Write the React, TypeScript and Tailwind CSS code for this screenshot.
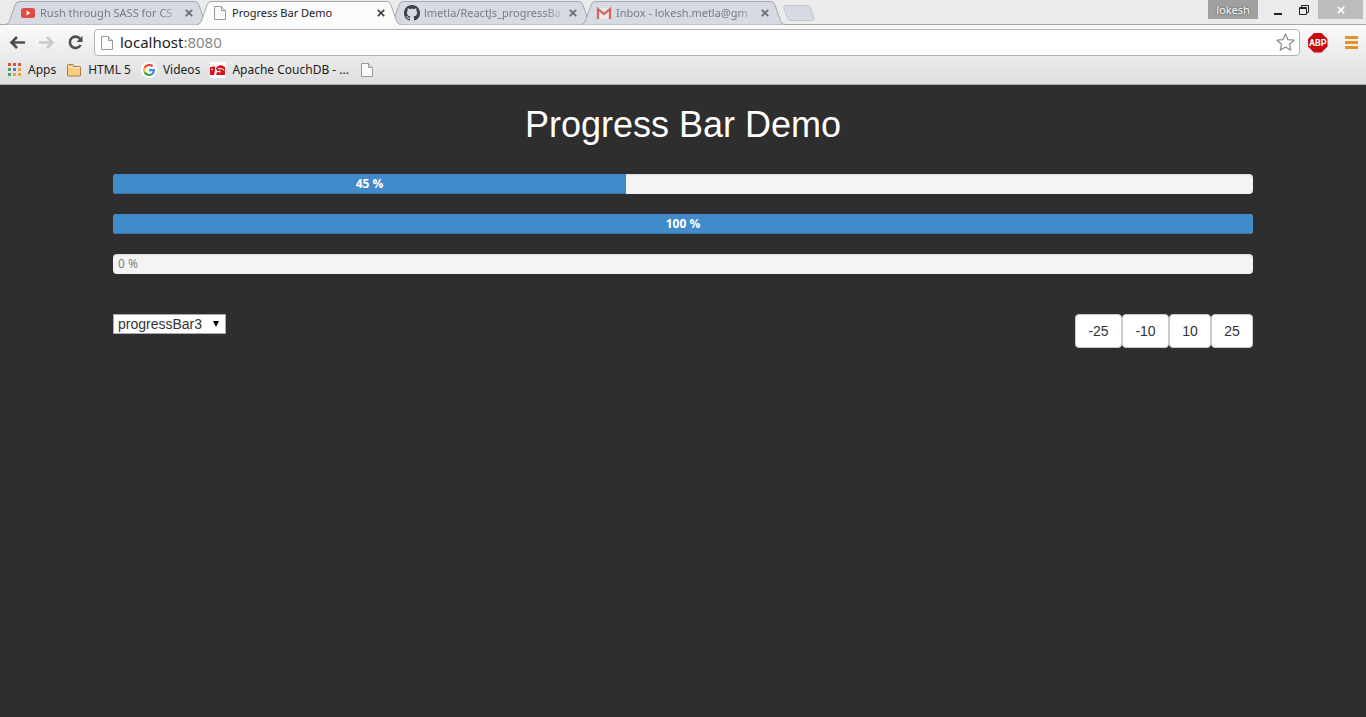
import { useState } from "react";
import type { ReactNode } from "react";

function PageIcon() {
  return (
    <svg width="16" height="16" viewBox="0 0 16 16" className="shrink-0" aria-hidden="true">
      <path d="M2.5 1.5h7l4 4v9h-11z" fill="#fafafa" stroke="#999" />
      <path d="M9.5 1.5v4h4" fill="#e4e4e4" stroke="#999" />
    </svg>
  );
}

function VideoIcon() {
  return (
    <svg width="16" height="16" viewBox="0 0 16 16" className="shrink-0" aria-hidden="true">
      <rect x="1" y="3" width="14" height="10" rx="2.5" fill="#e04b44" />
      <path d="M6.5 5.4v5l4-2.5z" fill="#fff" />
    </svg>
  );
}

function GitHubIcon() {
  return (
    <svg width="16" height="16" viewBox="0 0 16 16" className="shrink-0" aria-hidden="true">
      <path
        fill="#3c4046"
        d="M8 0C3.58 0 0 3.58 0 8c0 3.54 2.29 6.53 5.47 7.59.4.07.55-.17.55-.38 0-.19-.01-.82-.01-1.49-2.01.37-2.53-.49-2.69-.94-.09-.23-.48-.94-.82-1.13-.28-.15-.68-.52-.01-.53.63-.01 1.08.58 1.23.82.72 1.21 1.87.87 2.33.66.07-.52.28-.87.51-1.07-1.78-.2-3.64-.89-3.64-3.95 0-.87.31-1.59.82-2.15-.08-.2-.36-1.02.08-2.12 0 0 .67-.21 2.2.82.64-.18 1.32-.27 2-.27s1.36.09 2 .27c1.53-1.04 2.2-.82 2.2-.82.44 1.1.16 1.92.08 2.12.51.56.82 1.27.82 2.15 0 3.07-1.87 3.75-3.65 3.95.29.25.54.73.54 1.48 0 1.07-.01 1.93-.01 2.2 0 .21.15.46.55.38A8.01 8.01 0 0 0 16 8c0-4.42-3.58-8-8-8z"
      />
    </svg>
  );
}

function MailIcon() {
  return (
    <svg width="16" height="16" viewBox="0 0 16 16" className="shrink-0" aria-hidden="true">
      <rect x="1" y="3" width="14" height="11" fill="#e9e9ec" />
      <path d="M2 14V4l6 5 6-5v10" fill="none" stroke="#d8625b" strokeWidth="2.2" />
    </svg>
  );
}

function GoogleIcon() {
  return (
    <svg width="16" height="16" viewBox="0 0 16 16" className="shrink-0" aria-hidden="true">
      <circle cx="8" cy="8" r="8" fill="#fff" />
      <g fill="none" strokeWidth="2.2">
        <path d="M11.6 4.4A5 5 0 0 0 3.6 5.7" stroke="#ea4335" />
        <path d="M3.6 5.7a5 5 0 0 0 0 4.6" stroke="#fbbc05" />
        <path d="M3.6 10.3a5 5 0 0 0 7.7 1.5" stroke="#34a853" />
        <path d="M11.3 11.8A5 5 0 0 0 13 8.2H8" stroke="#4285f4" />
      </g>
    </svg>
  );
}

function AppsIcon() {
  const colors = ["#d95040", "#d95040", "#d95040", "#4fa165", "#4a7fe0", "#e8a93a", "#4fa165", "#e8a93a", "#e8a93a"];
  return (
    <svg width="14" height="14" viewBox="0 0 14 14" className="shrink-0" aria-hidden="true">
      {colors.map((color, i) => (
        <rect key={i} x={(i % 3) * 5} y={Math.floor(i / 3) * 5} width="3" height="3" fill={color} />
      ))}
    </svg>
  );
}

function FolderIcon() {
  return (
    <svg width="16" height="16" viewBox="0 0 16 16" className="shrink-0" aria-hidden="true">
      <path d="M1.5 13V3.5q0-1 1-1h4q1 0 1 1v1h6q1 0 1 1V13q0 1-1 1h-11q-1 0-1-1z" fill="#f9cd80" stroke="#a67a3c" />
      <path d="M2 5.500h12" stroke="#fdebc4" />
    </svg>
  );
}

function CouchIcon() {
  return (
    <svg width="16" height="16" viewBox="0 0 16 16" className="shrink-0" aria-hidden="true">
      <rect width="16" height="16" fill="#fff" />
      <path d="M0 5h2l1-1 2 1v3l-1 5H0zM6 6l2-2 3-1 4 2v8H6l1-3 4 .5-1-2-3 .5z" fill="#dc1218" />
      <path d="M1 7l2 1M8 6.500l5 .5 1 1.500" fill="none" stroke="#fff" />
    </svg>
  );
}

function CloseIcon() {
  return (
    <svg width="8" height="8" viewBox="0 0 8 8" aria-hidden="true">
      <path d="M.8.8l6.400 6.400M7.200.8L.8 7.200" stroke="currentColor" strokeWidth="1.700" />
    </svg>
  );
}

interface TabProps {
  title: string;
  icon: ReactNode;
  active?: boolean;
}

function Tab({ title, icon, active = false }: TabProps) {
  return (
    <div className={active ? "relative z-10 -mr-3 h-[25px] w-[204px] shrink-0" : "relative -mr-3 h-[25px] w-[204px] shrink-0"}>
      <svg className="absolute inset-0" width="204" height="25" viewBox="0 0 204 25" aria-hidden="true">
        <path
          d="M0 24.500C3 24.500 4 22 5 19.500L10 5Q11.500 1.500 14 1.500H190Q192.500 1.500 194 5L199 19.500C200 22 201 24.500 204 24.500"
          fill={active ? "#fbfbfb" : "#d6dbe3"}
          stroke="#a5a8ac"
        />
        {active && <path d="M2 24.500H202" stroke="#fbfbfb" />}
      </svg>
      <div className="relative flex h-[25px] items-center px-[15px] pr-3.5">
        {icon}
        <a
          href="#"
          className={
            active
              ? "ml-1 min-w-0 flex-1 whitespace-nowrap text-[#222]"
              : "ml-1 min-w-0 flex-1 mask-r-from-85% whitespace-nowrap text-[#777b82]"
          }
        >
          {title}
        </a>
        <button
          type="button"
          aria-label={`Close ${title}`}
          className={active ? "p-0.5 text-[#444]" : "p-0.5 text-[#666a70]"}
        >
          <CloseIcon />
        </button>
      </div>
    </div>
  );
}

function Bookmark({ icon, label }: { icon: ReactNode; label: string }) {
  return (
    <a href="#" className="flex items-center gap-1.5 whitespace-nowrap text-[#222]">
      {icon}
      {label}
    </a>
  );
}

function BrowserChrome() {
  return (
    <header className="font-['Noto_Sans','Open_Sans',sans-serif] text-[12px] leading-4">
      <div className="flex h-[25px] items-start bg-[#ebebeb] pl-[5px] text-[11px] shadow-[inset_0_-1px_#a5a8ac]">
        <Tab title="Rush through SASS for CS" icon={<VideoIcon />} />
        <Tab title="Progress Bar Demo" icon={<PageIcon />} active />
        <Tab title="lmetla/ReactJs_progressBa" icon={<GitHubIcon />} />
        <Tab title="Inbox - lokesh.metla@gm" icon={<MailIcon />} />
        <button type="button" aria-label="New tab" className="mt-[5px] ml-2.5">
          <svg width="32" height="16" viewBox="0 0 32 16" aria-hidden="true">
            <path d="M3 .5H24Q26.500.5 27.500 3L31 13Q31.500 15.500 29 15.500H8Q5.500 15.500 4.500 13L.8 3Q.5.5 3 .5z" fill="#d6dbe3" stroke="#c2c5ca" />
          </svg>
        </button>
        <div className="ml-auto flex h-[19px] items-center">
          <button type="button" className="h-[19px] w-[50px] bg-[#a0a0a0] text-white [text-shadow:0_0_2px_#333]">
            lokesh
          </button>
          <button type="button" aria-label="Minimize" className="ml-4">
            <svg width="8" height="10" viewBox="0 0 8 10" aria-hidden="true">
              <path d="M0 8h8v2H0z" fill="#222" />
            </svg>
          </button>
          <button type="button" aria-label="Restore" className="ml-[17px]">
            <svg width="10" height="10" viewBox="0 0 10 10" fill="none" stroke="#222" aria-hidden="true">
              <path d="M2.500 2V.5h7v7H8" />
              <path d="M.5 2.500h7v7h-7zM.5 3.500h7" />
            </svg>
          </button>
          <button type="button" aria-label="Close window" className="mr-[3px] ml-[9px] flex h-[19px] w-[45px] items-center justify-center bg-[#bcbcbc] text-white">
            <CloseIcon />
          </button>
        </div>
      </div>

      <div className="border-b border-[#aaa] bg-linear-to-b from-[#fafafa] to-[#dedede]">
        <div className="flex items-center pt-1 pr-2">
          <button type="button" aria-label="Back" className="ml-[9px]">
            <svg width="17" height="16" viewBox="0 0 17 16" fill="none" stroke="#4d4d4d" strokeWidth="2.6" aria-hidden="true">
              <path d="M16 7.500H3M8 2L2.500 7.500 8 13" />
            </svg>
          </button>
          <button type="button" aria-label="Forward" className="ml-3">
            <svg width="17" height="16" viewBox="0 0 17 16" fill="none" stroke="#c9c9c9" strokeWidth="2.6" aria-hidden="true">
              <path d="M1 7.500h13M9 2L14.500 7.500 9 13" />
            </svg>
          </button>
          <button type="button" aria-label="Reload" className="ml-3">
            <svg width="17" height="16" viewBox="0 0 17 16" aria-hidden="true">
              <path d="M13 3.700A5.700 5.700 0 1 0 13.600 10" fill="none" stroke="#4d4d4d" strokeWidth="2.600" />
              <path d="M15.500 .8v6.200H9.500z" fill="#4d4d4d" />
            </svg>
          </button>
          <div className="ml-2.5 flex h-[27px] min-w-0 flex-1 items-center rounded-sm border border-[#b4b4b4] bg-white pr-1 pl-1">
            <PageIcon />
            <div className="ml-[5px] flex-1 pb-0.5 text-[15px] leading-5 text-[#888]">
              <span className="text-[#222]">localhost</span>:8080
            </div>
            <button type="button" aria-label="Bookmark this page">
              <svg width="19" height="19" viewBox="0 0 19 19" aria-hidden="true">
                <path d="M9.500 1l2.400 5.600 6.100.6-4.600 4 1.400 6-5.300-3.100-5.300 3.100 1.400-6-4.600-4 6.100-.6z" fill="#fff" stroke="#8a8a8a" strokeWidth="1.200" strokeLinejoin="round" />
              </svg>
            </button>
          </div>
          <button type="button" aria-label="Adblock Plus" className="ml-2">
            <svg width="20" height="20" viewBox="0 0 20 20" aria-hidden="true">
              <path d="M6 0h7.500l6 6v7.500l-6 6H6l-6-6V6z" fill="#c70d12" />
              <text x="9.700" y="13" textAnchor="middle" fontSize="9" fontWeight="700" fill="#fff" fontFamily="Roboto">
                ABP
              </text>
            </svg>
          </button>
          <button type="button" aria-label="Menu" className="ml-[17px]">
            <svg width="13" height="13" viewBox="0 0 13 13" fill="#e8912d" aria-hidden="true">
              <path d="M0 0h13v3H0zM0 5h13v3H0zM0 10h13v3H0z" />
            </svg>
          </button>
        </div>
        <nav aria-label="Bookmarks" className="flex h-7 items-center gap-2.5 pl-2">
          <Bookmark icon={<AppsIcon />} label="Apps" />
          <Bookmark icon={<FolderIcon />} label="HTML 5" />
          <Bookmark icon={<GoogleIcon />} label="Videos" />
          <Bookmark icon={<CouchIcon />} label="Apache CouchDB - ..." />
          <a href="#" aria-label="Untitled bookmark">
            <PageIcon />
          </a>
        </nav>
      </div>
    </header>
  );
}

function ProgressBar({ value, label }: { value: number; label: string }) {
  return (
    <div
      role="progressbar"
      aria-label={label}
      aria-valuenow={value}
      aria-valuemin={0}
      aria-valuemax={100}
      className="mb-5 h-5 overflow-hidden rounded-sm bg-[#f4f4f4] font-['Open_Sans','Noto_Sans',sans-serif] text-[12px] leading-5 shadow-[inset_0_1px_2px_rgba(0,0,0,0.1)]"
    >
      {value > 0 ? (
        <div
          className="h-full bg-[#428bca] text-center font-bold text-white shadow-[inset_0_-1px_0_rgba(0,0,0,0.15)]"
          style={{ width: `${Math.min(value, 100)}%` }}
        >
          {value} %
        </div>
      ) : (
        <div className="px-[5px] text-[#777]">{value} %</div>
      )}
    </div>
  );
}

const names = ["progressBar1", "progressBar2", "progressBar3"];
const steps = [-25, -10, 10, 25];

export default function App() {
  const [values, setValues] = useState([45, 100, 0]);
  const [selected, setSelected] = useState(2);

  const change = (step: number) =>
    setValues((current) => current.map((v, i) => (i === selected ? Math.max(0, v + step) : v)));

  return (
    <div className="flex min-h-screen flex-col bg-[#2e2e2e] font-['Liberation_Sans',Arial,sans-serif] text-sm text-[#333]">
      <BrowserChrome />
      <main className="mx-auto w-full max-w-[1140px] pt-5">
        <h1 className="mb-[29px] text-center text-[36px] leading-10 text-white">Progress Bar Demo</h1>
        {values.map((value, i) => (
          <ProgressBar key={names[i]} value={value} label={names[i]} />
        ))}
        <div className="flex items-start justify-between pt-5">
          <div className="relative">
            <select
              aria-label="Progress bar"
              value={selected}
              onChange={(e) => setSelected(Number(e.target.value))}
              className="h-5 w-[113px] appearance-none border border-[#a9a9a9] bg-white pr-4 pl-1 text-sm leading-4"
            >
              {names.map((name, i) => (
                <option key={name} value={i}>
                  {name}
                </option>
              ))}
            </select>
            <svg className="pointer-events-none absolute top-[7px] right-[7px]" width="6" height="6" viewBox="0 0 6 6" aria-hidden="true">
              <path d="M0 0h6L3 6z" fill="#000" />
            </svg>
          </div>
          <div className="flex">
            {steps.map((step) => (
              <button
                key={step}
                type="button"
                onClick={() => change(step)}
                className={
                  step < 0
                    ? "w-[47px] rounded-sm border border-[#ccc] bg-white py-1.5 text-sm leading-5"
                    : "w-[42px] rounded-sm border border-[#ccc] bg-white py-1.5 text-sm leading-5"
                }
              >
                {step}
              </button>
            ))}
          </div>
        </div>
      </main>
    </div>
  );
}
